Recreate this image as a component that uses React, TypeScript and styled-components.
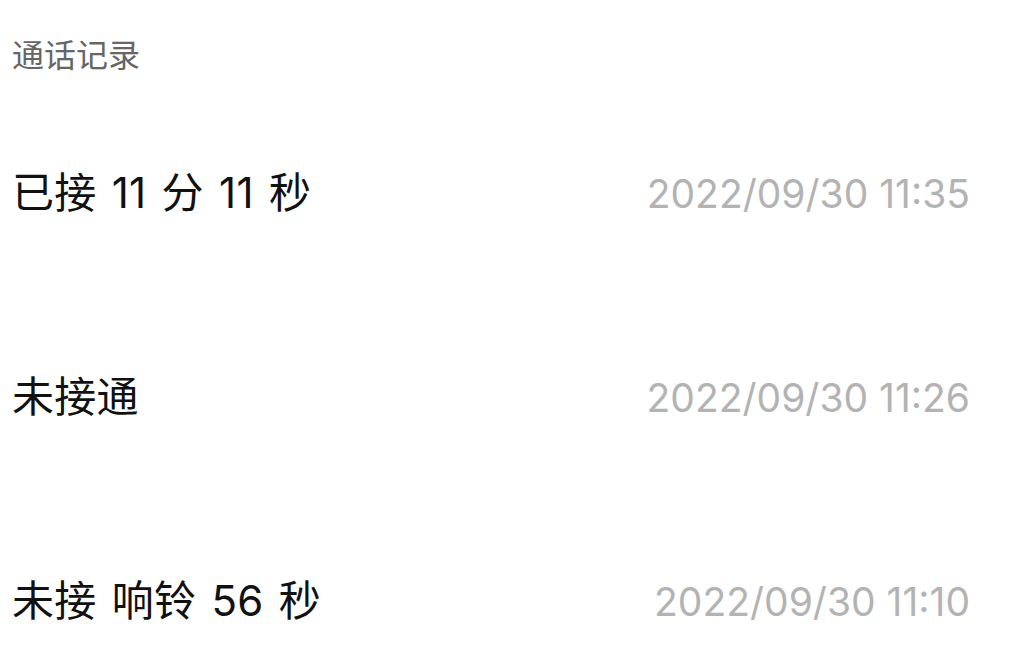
import React from 'react';
import styled, { createGlobalStyle } from 'styled-components';

type CallRecord = {
    id: number;
    label: string;
    time: string;
};

const records: CallRecord[] = [
    { id: 1, label: '已接 11 分 11 秒', time: '2022/09/30 11:35' },
    { id: 2, label: '未接通', time: '2022/09/30 11:26' },
    { id: 3, label: '未接 响铃 56 秒', time: '2022/09/30 11:10' },
];

const GlobalStyle = createGlobalStyle`
  html, body {
    margin: 0;
    padding: 0;
    background: #ffffff;
  }
  body {
    font-family: Inter, "Noto Sans CJK SC", sans-serif;
  }
`;

const Page = styled.div`
  width: 1031px;
  height: 652px;
  overflow: hidden;
  background: #ffffff;
  display: flex;
  flex-direction: column;
`;

const Header = styled.div`
  flex-shrink: 0;
  height: 91px;
  display: flex;
  align-items: center;
  padding: 14px 13px 0 12px;
  box-sizing: border-box;
`;

const Title = styled.h1`
  margin: 0;
  font-family: "Noto Sans CJK SC", sans-serif;
  font-size: 32px;
  font-weight: 400;
  color: #666666;
  line-height: 1;
`;

const List = styled.div`
  flex-shrink: 0;
  display: flex;
  flex-direction: column;
`;

const Row = styled.div`
  flex-shrink: 0;
  height: 204px;
  display: flex;
  align-items: center;
  justify-content: space-between;
  padding: 0 61px 0 12px;
  box-sizing: border-box;
`;

const Label = styled.span`
  font-size: 42px;
  color: #111111;
  line-height: 1;
  word-spacing: 3px;
  letter-spacing: 0.3px;
`;

const Time = styled.span`
  font-size: 39px;
  color: #b3b3b3;
  line-height: 1;
`;

const App: React.FC = () => {
    return (
        <Page>
            <GlobalStyle />
            <Header>
                <Title>通话记录</Title>
            </Header>
            <List>
                {records.map((record) => (
                    <Row key={record.id}>
                        <Label>{record.label}</Label>
                        <Time>{record.time}</Time>
                    </Row>
                ))}
            </List>
        </Page>
    );
};

export default App;
